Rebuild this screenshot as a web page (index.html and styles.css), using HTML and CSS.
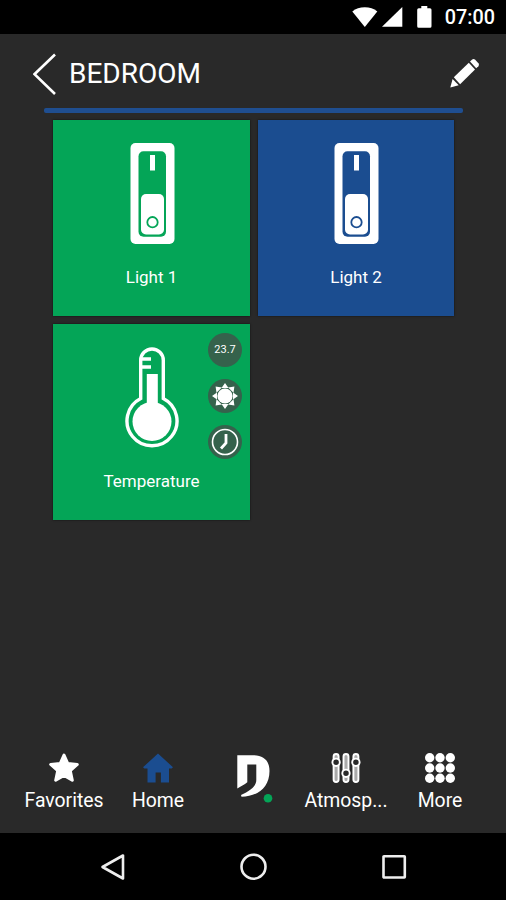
FILE: index.html
```
<!doctype html>
<html lang="en">
  <head>
    <meta charset="utf-8">
    <title>Bedroom</title>
    <link rel="stylesheet" href="styles.css">
  </head>
  <body>
    <div class="status">
      <svg class="wifi" width="26" height="20" viewBox="0 0 26 20"><path d="M0.3 4.4Q5.5 0.2 12.8 0.2T25.3 4.4L12.8 20z"/></svg>
      <svg class="signal" width="21" height="20" viewBox="0 0 21 20"><path d="M20.3 0v19.8H0z"/></svg>
      <svg class="battery" width="15" height="22" viewBox="0 0 15 22"><path d="M4.3 0h6v2.2h2.7q1.5 0 1.5 1.5v16.6q0 1.5-1.5 1.5H1.7q-1.5 0-1.5-1.5V3.7q0-1.5 1.5-1.5h2.6z"/></svg>
      <span>07:00</span>
    </div>
    <div class="header">
      <svg class="back" width="24" height="44" viewBox="0 0 24 44"><path d="M22 2.500L1.500 22.200 22 42"/></svg>
      <h1>BEDROOM</h1>
      <svg class="pencil" width="32" height="32" viewBox="0 0 32 32">
        <path d="M1.300 29.600L3.600 20.900 9.700 27.200z"/>
        <path d="M4.800 19.300L19.800 4.800 26 11.500 11.100 26.200z"/>
        <path d="M21 3.600L23.200 1.500Q24.700.3 26.200 1.800L29.400 5.200Q30.700 6.700 29.400 8.200L27.200 10.300z"/>
      </svg>
    </div>
    <div class="line"></div>
    <div class="tiles">
      <div class="tile green">
        <svg class="switch" width="45" height="102" viewBox="0 0 45 102">
          <rect class="fill" x="0.500" y="0" width="44" height="101" rx="5"/>
          <rect class="bg" x="8.500" y="8.200" width="27.500" height="85.500" rx="5"/>
          <rect class="fill" x="20" y="12" width="5" height="15.500"/>
          <rect class="fill" x="11" y="51" width="23" height="40.500" rx="5"/>
          <circle class="ring" cx="22.500" cy="79.200" r="5.200"/>
        </svg>
        <p>Light 1</p>
      </div>
      <div class="tile blue">
        <svg class="switch" width="45" height="102" viewBox="0 0 45 102">
          <rect class="fill" x="0.500" y="0" width="44" height="101" rx="5"/>
          <rect class="bg" x="8.500" y="8.200" width="27.500" height="85.500" rx="5"/>
          <rect class="fill" x="20" y="12" width="5" height="15.500"/>
          <rect class="fill" x="11" y="51" width="23" height="40.500" rx="5"/>
          <circle class="ring" cx="22.500" cy="79.200" r="5.200"/>
        </svg>
        <p>Light 2</p>
      </div>
      <div class="tile green">
        <svg class="thermo" width="56" height="102" viewBox="0 0 56 102">
          <path class="outline" d="M16.700 51.500V13.300a11.300 11.300 0 0 1 22.600 0V51.500A25 25 0 1 1 16.700 51.500z"/>
          <circle class="fill" cx="28" cy="74.500" r="19.500"/>
          <path class="fill" d="M22.800 27h11v34h-11zM17 10.300h10v3.400H17zM17 18.300h10v3.400H17z"/>
        </svg>
        <p>Temperature</p>
        <div class="badges">
          <span class="badge">23.7</span>
          <span class="badge">
            <svg width="34" height="34" viewBox="0 0 34 34">
              <circle class="fill" cx="17" cy="17" r="7.600"/>
              <path class="fill" d="M13.500 9L17 4l3.500 5zM20.200 8.500L26.400 7.600 25.500 13.800zM25 13.500L30 17l-5 3.500zM25.500 20.200L26.400 26.400 20.200 25.500zM20.500 25L17 30l-3.500-5zM13.800 25.500L7.600 26.400 8.500 20.200zM9 20.500L4 17l5-3.500zM8.500 13.800L7.600 7.600 13.800 8.500z"/>
            </svg>
          </span>
          <span class="badge">
            <svg width="34" height="34" viewBox="0 0 34 34">
              <circle class="clock" cx="17" cy="17" r="12.500"/>
              <path class="hands" d="M18 9V18L13 23.500"/>
            </svg>
          </span>
        </div>
      </div>
    </div>
    <div class="menu">
      <div class="item">
        <svg width="32" height="32" viewBox="0 0 32 32"><path class="star" d="M16 3L19.800 11.500 29.300 12.500 22.300 18.700 24.300 28.300 16 23.500 7.700 28.300 9.700 18.700 2.700 12.500 12.200 11.500z"/></svg>
        <span>Favorites</span>
      </div>
      <div class="item">
        <svg width="32" height="32" viewBox="0 0 32 32"><path class="home" d="M16 1.500L31 15.300 29.500 16.500H27V30.500H18.900V20.500H13.600V30.500H5.500V16.500H2.500L1 15.300z"/></svg>
        <span>Home</span>
      </div>
      <div class="item logo">
        <svg width="40" height="50" viewBox="-1 0 40 50">
          <path class="fill" d="M2.300 2.300H18C29 2.300 34.500 8 34.500 18C34.500 35 22 43.500 6.500 43.800L6 42C14 38 21.300 34 21.300 27V11.500H12.300V29.200C9.500 31.500 5.500 33.500 2.300 35.500z"/>
          <circle class="dot" cx="33" cy="45.300" r="4.300"/>
        </svg>
      </div>
      <div class="item">
        <svg width="32" height="32" viewBox="0 0 32 32">
          <g class="sliders">
            <rect class="grey" x="3.600" y="2" width="5" height="28" rx="2.500"/>
            <rect class="grey" x="13.500" y="2" width="5" height="28" rx="2.500"/>
            <rect class="grey" x="23.400" y="2" width="5" height="28" rx="2.500"/>
            <circle cx="6.100" cy="10.300" r="3.700"/>
            <circle cx="16" cy="21.300" r="3.700"/>
            <circle cx="25.900" cy="10.300" r="3.700"/>
          </g>
        </svg>
        <span>Atmosp...</span>
      </div>
      <div class="item">
        <svg width="32" height="32" viewBox="0 0 32 32">
          <g class="fill">
            <circle cx="5.700" cy="5.700" r="4.700"/><circle cx="16" cy="5.700" r="4.700"/><circle cx="26.300" cy="5.700" r="4.700"/>
            <circle cx="5.700" cy="16" r="4.700"/><circle cx="16" cy="16" r="4.700"/><circle cx="26.300" cy="16" r="4.700"/>
            <circle cx="5.700" cy="26.300" r="4.700"/><circle cx="16" cy="26.300" r="4.700"/><circle cx="26.300" cy="26.300" r="4.700"/>
          </g>
        </svg>
        <span>More</span>
      </div>
    </div>
    <div class="android">
      <svg width="28" height="28" viewBox="0 0 28 28"><path d="M3.500 14L24 2.500v23z"/></svg>
      <svg width="28" height="28" viewBox="0 0 28 28"><circle cx="13.500" cy="13.700" r="12"/></svg>
      <svg width="28" height="28" viewBox="0 0 28 28"><rect x="3.500" y="3.200" width="21.300" height="21.300" rx="0.500"/></svg>
    </div>
  </body>
</html>
```
FILE: styles.css
```
* {box-sizing:border-box;}
body {margin:0;width:506px;height:900px;display:flex;flex-direction:column;overflow:hidden;
  background:#292929;color:#fff;font-family:Roboto, sans-serif;}
svg {display:block;flex:none;}
h1, p {margin:0;font-weight:400;}

.status {height:34px;flex:none;background:#000;display:flex;align-items:center;justify-content:flex-end;padding-right:11px;}
.status svg {fill:#fff;}
.status span {font-size:19.8px;font-weight:500;line-height:34px;padding-top:2px;}
.wifi {margin-right:4px;}
.signal {margin-right:14px;}
.battery {margin-right:13px;}

.header {height:74px;flex:none;display:flex;align-items:center;padding:5px 25px 0 33px;}
.header h1 {font-size:28px;line-height:34px;margin-left:12px;flex:1;}
.back path {fill:none;stroke:#fff;stroke-width:2.6;}
.pencil {fill:#fff;}
.line {height:5px;flex:none;margin:0 43px 0 44px;border-radius:2px;background:#1f4e90;}

.tiles {display:grid;grid-template-columns:197px 196px;grid-auto-rows:196px;gap:8px;padding:7px 0 0 53px;}
.tile {position:relative;display:flex;flex-direction:column;align-items:center;padding-top:23px;box-shadow:0 0 2px #111;}
.tile p {font-size:17px;line-height:22px;margin-top:21px;}
.green {background:#04a557;--bg:#04a557;}
.blue {background:#1b4d90;--bg:#1b4d90;}
.switch {margin-left:1px;}
.fill {fill:#fff;}
.bg {fill:var(--bg);}
.ring {fill:none;stroke:var(--bg);stroke-width:1.8;}
.outline {fill:none;stroke:#fff;stroke-width:3.4;}

.badges {position:absolute;top:9px;right:8px;display:flex;flex-direction:column;gap:12px;}
.badge {width:34px;height:34px;border-radius:50%;background:#35624c;font-size:11px;line-height:34px;text-align:center;}
.clock {fill:none;stroke:#fff;stroke-width:1.6;}
.hands {fill:none;stroke:#fff;stroke-width:2.8;}

.menu {display:flex;height:81px;flex:none;margin-top:auto;padding:0 18px 0 17px;}
.item {width:94px;display:flex;flex-direction:column;align-items:center;}
.item span {font-size:19.4px;line-height:24px;margin-top:5px;}
.star {fill:#fff;stroke:#fff;stroke-width:3;stroke-linejoin:round;}
.home {fill:#1b4d90;}
.logo {padding:1px 0 0 3px;}
.dot {fill:#04a557;}
.sliders {fill:#292929;stroke:#fff;stroke-width:1.9;}
.sliders .grey {fill:#aaa;}

.android {height:67px;flex:none;background:#000;display:flex;align-items:center;justify-content:space-between;padding:0 98px 0 99px;}
.android svg {fill:none;stroke:#eee;stroke-width:2.6;stroke-linejoin:round;}
```
